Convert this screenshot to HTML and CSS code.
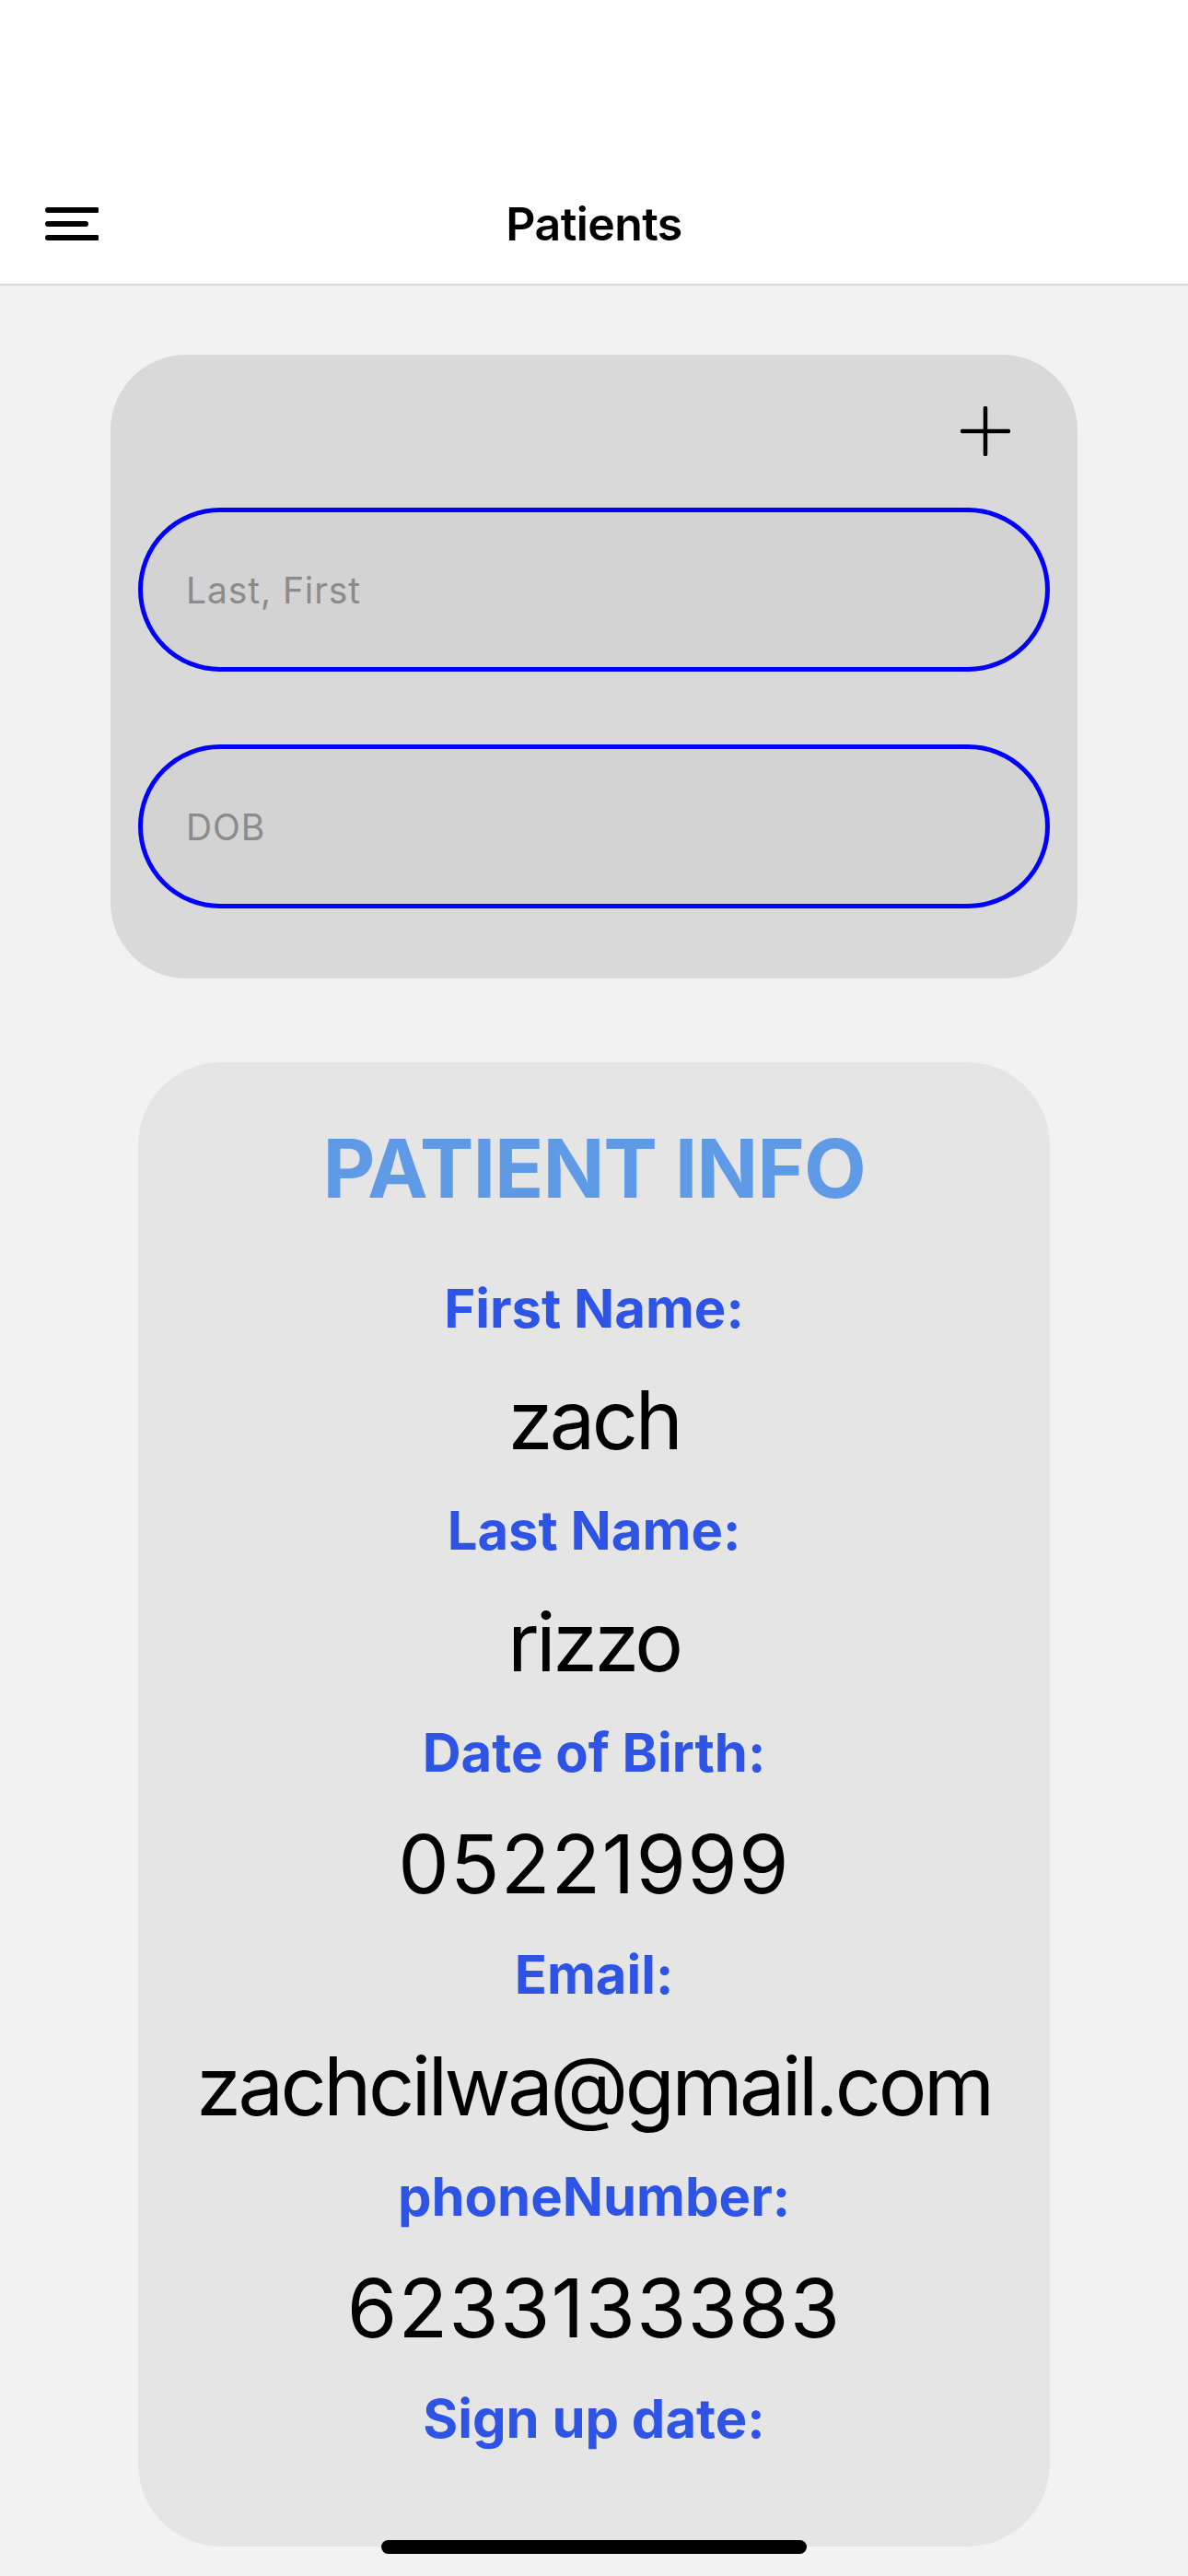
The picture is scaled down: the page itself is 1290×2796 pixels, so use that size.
FILE: index.html
```html
<!DOCTYPE html>
<html lang="en">
<head>
<meta charset="utf-8">
<title>Patients</title>
<link rel="stylesheet" href="styles.css">
</head>
<body>
<div class="screen">
  <header class="header">
    <div class="navbar">
      <div class="nav-left">
        <svg class="menu-icon" width="58" height="36" viewBox="0 0 58 36">
          <line x1="3" y1="3" x2="56" y2="3" />
          <line x1="3" y1="18" x2="44" y2="18" />
          <line x1="3" y1="33" x2="56" y2="33" />
        </svg>
      </div>
      <div class="nav-title">Patients</div>
      <div class="nav-right"></div>
    </div>
  </header>

  <main class="content">
    <section class="search-card">
      <div class="add-row">
        <svg class="add-icon" width="54" height="54" viewBox="0 0 54 54">
          <line x1="27" y1="2" x2="27" y2="52" />
          <line x1="2" y1="27" x2="52" y2="27" />
        </svg>
      </div>
      <div class="field"><span class="placeholder">Last, First</span></div>
      <div class="field field-second"><span class="placeholder">DOB</span></div>
    </section>

    <section class="info-card">
      <h1 class="info-title">PATIENT INFO</h1>
      <div class="label label-first">First Name:</div>
      <div class="value">zach</div>
      <div class="label">Last Name:</div>
      <div class="value">rizzo</div>
      <div class="label">Date of Birth:</div>
      <div class="value value-num">05221999</div>
      <div class="label">Email:</div>
      <div class="value">zachcilwa@gmail.com</div>
      <div class="label">phoneNumber:</div>
      <div class="value value-num">6233133383</div>
      <div class="label">Sign up date:</div>
    </section>
  </main>

  <div class="home-indicator"></div>
</div>
</body>
</html>
```

FILE: styles.css
```css
html, body {
  margin: 0;
  padding: 0;
}

body {
  background: #f2f2f2;
  font-family: "Inter", "Noto Sans", "Liberation Sans", sans-serif;
}

.screen {
  position: relative;
  width: 1290px;
  height: 2796px;
  overflow: hidden;
  background: #f2f2f2;
}

/* Header */
.header {
  background: #ffffff;
  padding-top: 178px;
  border-bottom: 2px solid #d9d9d9;
}

.navbar {
  height: 130px;
  display: grid;
  grid-template-columns: 1fr auto 1fr;
  align-items: center;
}

.nav-left {
  padding-left: 49px;
  display: flex;
  align-items: center;
}

.menu-icon line {
  stroke: #000;
  stroke-width: 6;
  stroke-linecap: round;
}

.nav-title {
  font-size: 50px;
  font-weight: 600;
  color: #000;
  letter-spacing: -0.6px;
  line-height: 1;
}

/* Content */
.content {
  padding-top: 75px;
  display: flex;
  flex-direction: column;
  align-items: center;
}

.search-card {
  width: 1050px;
  box-sizing: border-box;
  background: #d9d9d9;
  border-radius: 82px;
  padding: 56px 30px 76px 30px;
  display: flex;
  flex-direction: column;
}

.add-row {
  display: flex;
  justify-content: flex-end;
  padding-right: 43px;
}

.add-icon line {
  stroke: #000;
  stroke-width: 4.5;
  stroke-linecap: round;
}

.field {
  margin-top: 56px;
  height: 178px;
  box-sizing: border-box;
  border: 5px solid #0000ff;
  border-radius: 89px;
  background: #d3d3d3;
  display: flex;
  align-items: center;
  padding-left: 47px;
}

.field-second {
  margin-top: 79px;
}

.placeholder {
  font-size: 39px;
  color: #8b8b8b;
  letter-spacing: 0.9px;
}

.info-card {
  margin-top: 91px;
  width: 990px;
  box-sizing: border-box;
  background: #e5e5e5;
  border-radius: 90px;
  padding: 61px 0 103px 0;
  display: flex;
  flex-direction: column;
  align-items: center;
  text-align: center;
}

.info-title {
  margin: 0;
  font-size: 88px;
  line-height: 108px;
  font-weight: 700;
  color: #5f9ae6;
  letter-spacing: -1.1px;
}

.label {
  margin-top: 30px;
  font-size: 58px;
  line-height: 72px;
  font-weight: 700;
  color: #2e54e6;
  letter-spacing: 0;
}

.label-first {
  margin-top: 62px;
}

.value {
  margin-top: 31px;
  font-size: 88px;
  line-height: 108px;
  font-weight: 400;
  color: #000;
  letter-spacing: -3.4px;
}

.value-num {
  letter-spacing: 1.2px;
}

.home-indicator {
  position: absolute;
  left: 414px;
  top: 2757px;
  width: 462px;
  height: 15px;
  border-radius: 8px;
  background: #000;
}
```
